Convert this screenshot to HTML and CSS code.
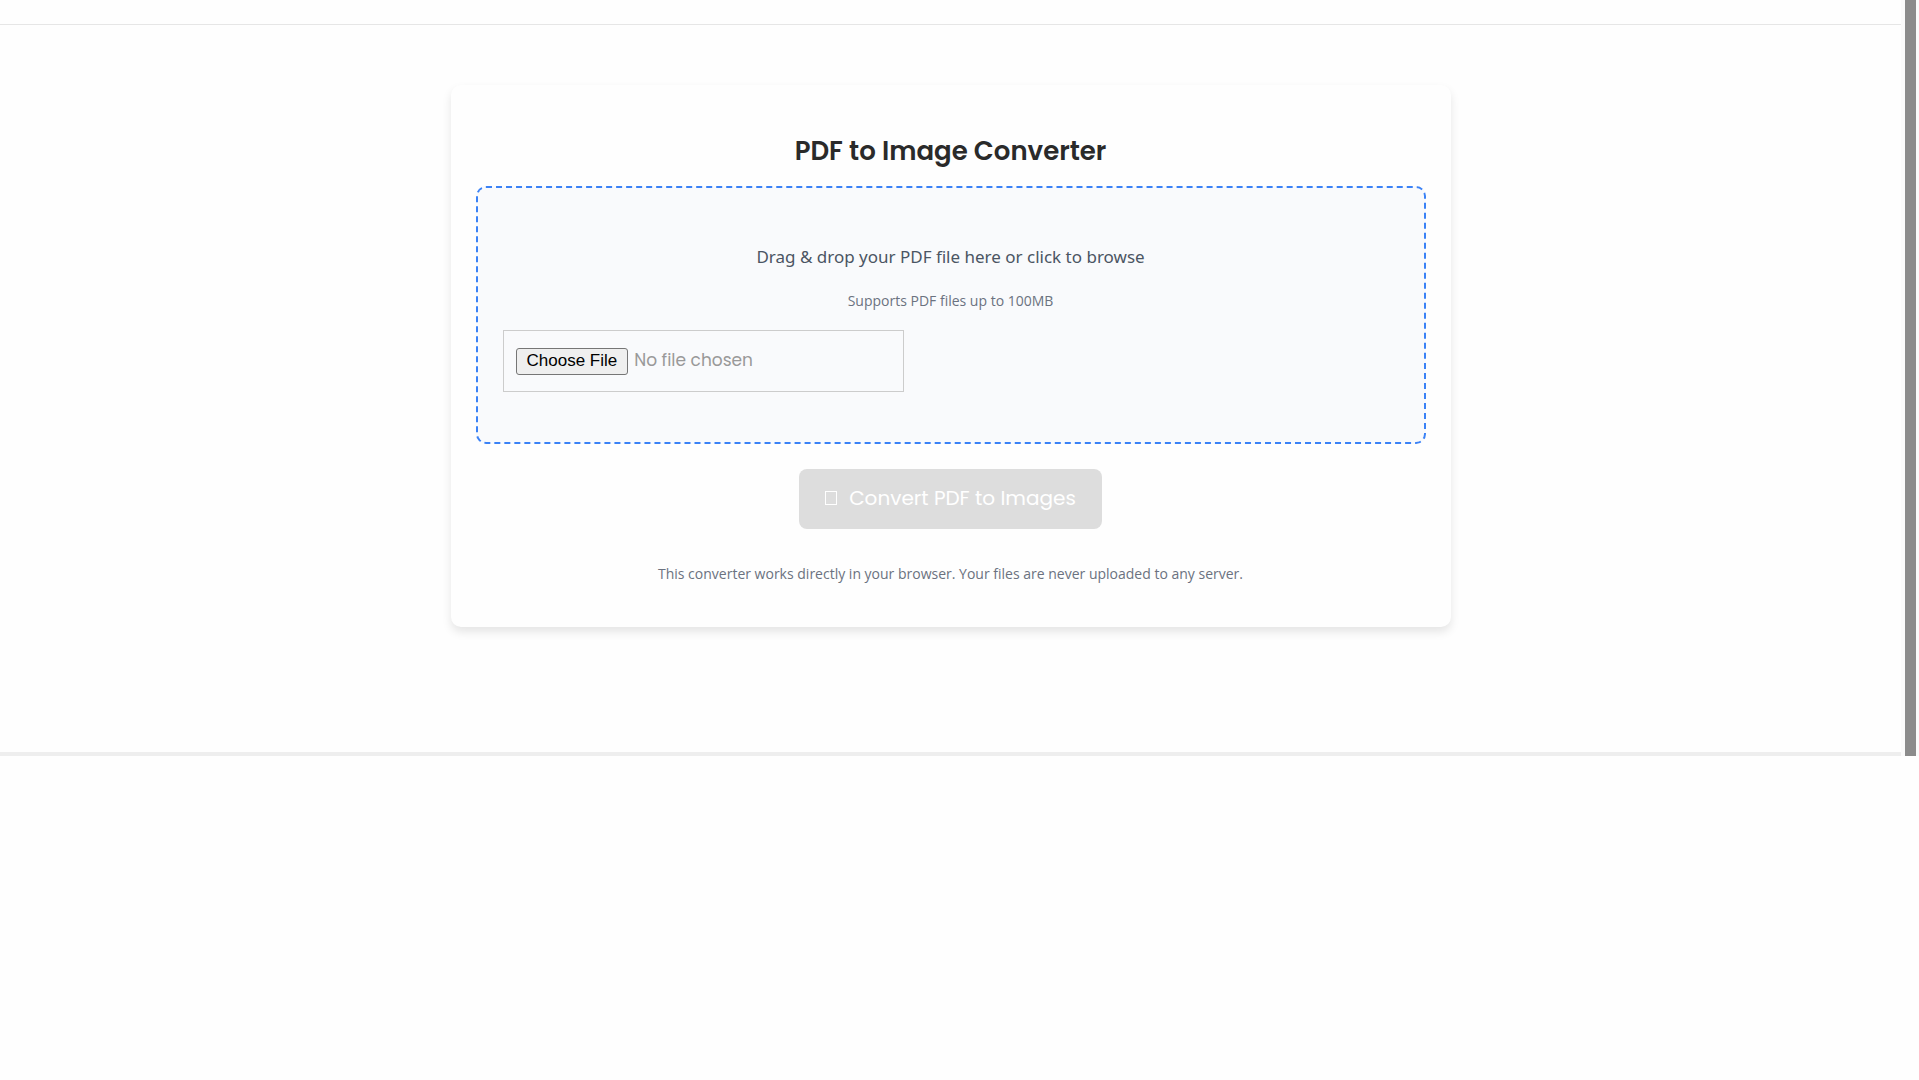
FILE: index.html
```html
<!DOCTYPE html>
<html lang="en">
<head>
<meta charset="utf-8">
<title>PDF to Image Converter</title>
<link rel="stylesheet" href="styles.css">
</head>
<body>
<div class="frame">
  <div class="page">
    <header class="topbar"></header>
    <main class="content">
      <section class="card">
        <h1 class="title">PDF to Image Converter</h1>
        <div class="dropzone">
          <label class="prompt" for="pdf">Drag &amp; drop your PDF file here or click to browse</label>
          <p class="hint">Supports PDF files up to 100MB</p>
          <input class="file" type="file" id="pdf" accept="application/pdf">
        </div>
        <button class="convert" type="button" disabled><span class="glyph"></span>Convert PDF to Images</button>
        <p class="note">This converter works directly in your browser. Your files are never uploaded to any server.</p>
      </section>
    </main>
    <footer class="bottombar"></footer>
  </div>
  <div class="scrollbar"><div class="thumb"></div></div>
</div>
</body>
</html>
```

FILE: styles.css
```css
* {
  box-sizing: border-box;
}

body {
  margin: 0;
  background: #fefefe;
  font-family: Poppins, Inter, sans-serif;
}

.frame {
  display: flex;
}

.page {
  flex: 1;
}

.topbar {
  height: 25px;
  border-bottom: 1px solid #e6e6e6;
}

.content {
  padding: 60px 20px 125px;
}

.card {
  display: flex;
  flex-direction: column;
  align-items: center;
  max-width: 1000px;
  margin: 0 auto;
  padding: 45px 25px 41px;
  border-radius: 10px;
  background: #fefefe;
  box-shadow: 0 5px 10px rgba(0, 0, 0, 0.1);
}

.title {
  margin: 0 0 14px;
  color: #2a2a2a;
  font-size: 26px;
  font-weight: 600;
  line-height: 42px;
}

.dropzone {
  display: flex;
  flex-direction: column;
  align-items: center;
  align-self: stretch;
  padding: 53px 25px 50px;
  border: 2px dashed #3b82f6;
  border-radius: 10px;
  background: #f9fafc;
}

.prompt {
  color: #4b5563;
  font-family: "Segoe UI", "Noto Sans", sans-serif;
  font-size: 17px;
  line-height: 32px;
}

.hint,
.note {
  margin: 0;
  color: #6b7280;
  font-family: "Segoe UI", "Open Sans", sans-serif;
  font-size: 14px;
  line-height: 24px;
}

.hint {
  margin: 16px 0 17px;
}

.file {
  align-self: flex-start;
  width: 401px;
  max-width: 100%;
  height: 62px;
  padding: 16px 12px;
  border: 1px solid #ccc;
  color: #999;
  font-family: Poppins, Inter, sans-serif;
  font-size: 17px;
  line-height: 26px;
}

.file::file-selector-button {
  height: 27px;
  margin-right: 6px;
  padding: 0 10px;
  border: 1px solid #767676;
  border-radius: 3px;
  background: #efefef;
  color: #000;
  font-family: "Liberation Sans", Arial, sans-serif;
  font-size: 17px;
}

.convert {
  display: flex;
  align-items: center;
  gap: 12px;
  height: 60px;
  margin: 25px 0 33px;
  padding: 0 26px 2px;
  border: 0;
  border-radius: 8px;
  background: #ddd;
  color: #fff;
  font-family: Poppins, Inter, sans-serif;
  font-size: 20px;
}

.glyph {
  width: 12px;
  height: 14px;
  border: 1px solid #fff;
}

.bottombar {
  height: 4px;
  background: #eee;
}

.scrollbar {
  width: 18px;
  padding: 0 3px 0 4px;
  background: #fafafa;
}

.thumb {
  height: 100%;
  background: #8b8b8b;
}
```
